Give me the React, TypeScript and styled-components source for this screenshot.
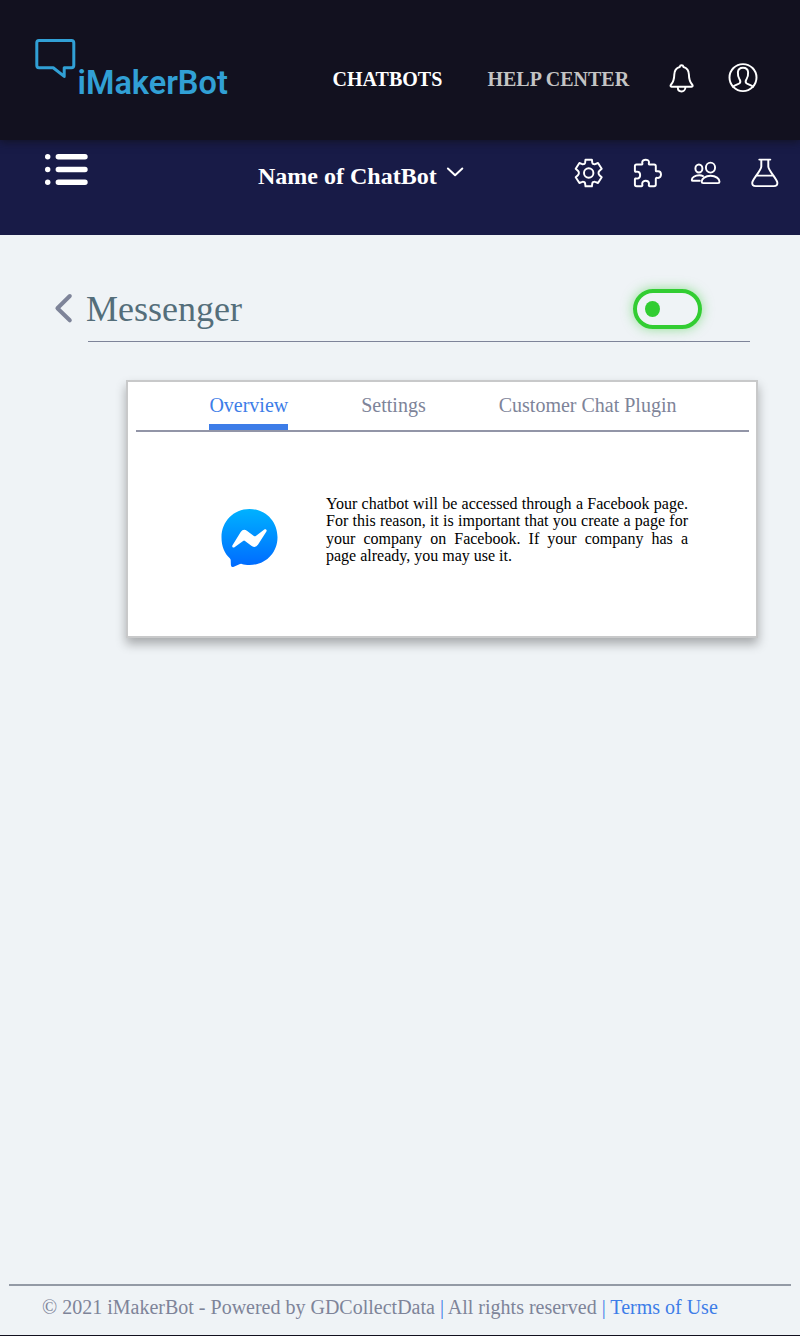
import React from "react";
import styled, { createGlobalStyle } from "styled-components";

const GlobalStyle = createGlobalStyle`
  *, *::before, *::after { box-sizing: border-box; }
  body {
    margin: 0;
    background: #eff3f6;
    font-family: "Liberation Serif", "Times New Roman", serif;
  }
  h1, h2, p { margin: 0; }
  svg { display: block; flex: none; overflow: visible; }
`;

const Page = styled.div`
  display: flex;
  flex-direction: column;
  min-height: 1336px;
  background: #eff3f6;
  border-bottom: 1px solid #12111f;
`;

const Header = styled.header`
  position: relative;
  z-index: 1;
  display: flex;
  height: 140px;
  padding-left: 35px;
  background: #12111f;
  box-shadow: 0 2px 8px rgba(18, 17, 31, 0.8);
`;

const Brand = styled.div`
  display: flex;
  width: 297.6px;
  padding-top: 38px;
`;

const BrandName = styled.span`
  margin: 26px 0 0 1.5px;
  font: 600 32.5px/38px Roboto, sans-serif;
  color: #31a0d5;
`;

const MainNav = styled.nav`
  display: flex;
  gap: 45.2px;
  width: 336.6px;
  padding-top: 68px;
`;

const NavLink = styled.a<{ $active?: boolean }>`
  font-size: 20px;
  line-height: 23px;
  font-weight: bold;
  white-space: nowrap;
  color: ${(p) => (p.$active ? "#ffffff" : "#c4c4c4")};
`;

const HeaderIcons = styled.div`
  display: flex;
  gap: 33.3px;
  padding-top: 63px;
`;

const BotBar = styled.div`
  display: flex;
  height: 95px;
  padding-left: 45px;
  background: #181b47;
`;

const MenuButton = styled.div`
  width: 213px;
  padding-top: 13px;
`;

const BotPicker = styled.div`
  display: flex;
  gap: 9.4px;
  width: 316px;
  padding-top: 22px;
`;

const BotName = styled.h2`
  font-size: 24px;
  line-height: 28px;
  white-space: nowrap;
  color: #ffffff;
`;

const ToolIcons = styled.div`
  display: flex;
  gap: 28.5px;
  padding-top: 17.6px;
`;

const Main = styled.main`
  flex: 1;
  padding: 54px 42px 0 54px;
`;

const TitleRow = styled.div`
  display: flex;
  align-items: flex-start;
  height: 52px;
  padding-right: 56px;
`;

const Title = styled.h1`
  flex: 1;
  padding-left: 12px;
  font-size: 36px;
  line-height: 41px;
  font-weight: normal;
  color: #546e7a;
`;

const Toggle = styled.div`
  display: flex;
  align-items: center;
  width: 69px;
  height: 40px;
  margin-right: 0.3px;
  padding-left: 8px;
  border: 4px solid #32cd32;
  border-radius: 20px;
  box-shadow: 0 0 12px rgba(50, 205, 50, 0.5);
`;

const Knob = styled.span`
  width: 15px;
  height: 16px;
  border-radius: 50%;
  background: #32cd32;
`;

const TitleRule = styled.div`
  width: 662px;
  height: 1px;
  margin-left: 34px;
  background: #7e8499;
`;

const Card = styled.section`
  width: 632px;
  height: 258px;
  margin: 38px 0 0 72px;
  padding: 0 7px 0 8px;
  border: 2px solid #c8c9ca;
  background: #ffffff;
  box-shadow: 0 6px 10px rgba(0, 0, 0, 0.3);
`;

const Tabs = styled.div`
  display: flex;
  gap: 73px;
  height: 50px;
  padding: 12px 0 0 73.4px;
  border-bottom: 2px solid #9295a7;
`;

const Tab = styled.div<{ $active?: boolean }>`
  height: 36px;
  border-bottom: 6px solid ${(p) => (p.$active ? "#3d7de8" : "transparent")};
  font-size: 20px;
  line-height: 22px;
  white-space: nowrap;
  color: ${(p) => (p.$active ? "#3d7de8" : "#7e8499")};
`;

const CardBody = styled.div`
  display: flex;
  gap: 48px;
  padding: 63px 0 0 85px;
`;

const LogoSlot = styled.div`
  padding-top: 14.4px;
`;

const Description = styled.p`
  width: 362px;
  font-size: 16px;
  line-height: 17.4px;
  text-align: justify;
  color: #000000;
`;

const Footer = styled.footer`
  height: 51px;
  margin: 0 9px;
  padding: 10px 0 0 33px;
  border-top: 2px solid #939aa5;
  font-size: 20px;
  line-height: 23px;
  white-space: nowrap;
  color: #7e8499;
`;

const FooterAccent = styled.span`
  color: #3d7de8;
`;

type StrokeIconProps = {
  width: number;
  height: number;
  stroke?: number;
  color?: string;
  children: React.ReactNode;
};

function StrokeIcon({ width, height, stroke = 1.95, color = "#ffffff", children }: StrokeIconProps) {
  return (
    <svg
      width={width}
      height={height}
      viewBox={`0 0 ${width} ${height}`}
      fill="none"
      stroke={color}
      strokeWidth={stroke}
      strokeLinejoin="round"
      strokeLinecap="round"
    >
      {children}
    </svg>
  );
}

const SpeechBubble = () => (
  <StrokeIcon width={41} height={41} stroke={3} color="#31a0d5">
    <path d="M3.9 2.4H36.4Q38.8 2.4 38.8 4.8V27.3Q38.8 29.7 36.4 29.7H29.2V38.4L18.2 29.7H3.9Q1.8 29.7 1.8 27.3V4.8Q1.8 2.4 3.9 2.4Z" />
  </StrokeIcon>
);

const Bell = () => (
  <StrokeIcon width={26} height={30}>
    <path d="M12.6 2.3C11.4 2.3 10.9 3 10.7 4C7 5 5.4 7.8 5.3 11.5C5.2 17 4.4 19 2.1 21.5C1.1 22.6 1.4 23.8 2.6 23.8H22.6C23.8 23.8 24.1 22.6 23.1 21.5C20.8 19 20 17 19.9 11.5C19.8 7.8 18.2 5 14.5 4C14.3 3 13.8 2.3 12.6 2.3Z" />
    <path d="M8.8 24.2C8.8 29.8 16.4 29.8 16.4 24.2" />
  </StrokeIcon>
);

const UserCircle = () => (
  <StrokeIcon width={30} height={30}>
    <circle cx="15" cy="14.6" r="13.5" />
    <path d="M5 23.8C6.3 22.2 10.7 21.3 11.7 20.1C12.4 19.2 12.2 17.2 11.5 16.2C10.2 14.4 9.7 12.4 9.9 9.3C10.1 6.2 11.8 4.7 15 4.7C18.2 4.7 19.9 6.2 20.1 9.3C20.3 12.4 19.8 14.4 18.5 16.2C17.8 17.2 17.6 19.2 18.3 20.1C19.3 21.3 23.7 22.2 25 23.8" />
  </StrokeIcon>
);

const ListMenu = () => (
  <StrokeIcon width={43} height={34} stroke={5.4}>
    <path d="M13.3 3.7H40M13.3 16.5H40M13.3 29.3H40" />
    <g fill="#ffffff" stroke="none">
      <circle cx="2.7" cy="3.7" r="2.7" />
      <circle cx="2.7" cy="16.5" r="2.7" />
      <circle cx="2.7" cy="29.3" r="2.7" />
    </g>
  </StrokeIcon>
);

const ChevronDown = () => (
  <StrokeIcon width={18} height={19} stroke={2}>
    <path d="M1.9 6.5L9.1 13.3L16.3 6.5" />
  </StrokeIcon>
);

const Gear = () => (
  <StrokeIcon width={30} height={30}>
    <circle cx="14.7" cy="15" r="4.7" />
    <path d="M11.5 1.7H17.9L18.3 4.7Q18.5 5.6 19.4 6Q20.3 6.5 21.1 6.1L24 5L27.7 10.8L25.5 12.8Q24.5 13.7 24.5 15Q24.5 16.3 25.5 17.2L27.7 19.2L24 25L21.1 23.9Q20.3 23.5 19.4 24Q18.5 24.4 18.3 25.3L17.9 28.3H11.5L11.1 25.3Q10.9 24.4 10 24Q9.1 23.5 8.3 23.9L5.4 25L1.7 19.2L3.9 17.2Q4.9 16.3 4.9 15Q4.9 13.7 3.9 12.8L1.7 10.8L5.4 5L8.3 6.1Q9.1 6.5 10 6Q10.9 5.6 11.1 4.7Z" />
  </StrokeIcon>
);

const Puzzle = () => (
  <StrokeIcon width={30} height={30}>
    <path d="M3.5 6.4H8.6C10 6.4 9.2 5 9.2 4.2C9.2 .8 16 .8 16 4.2C16 5 15.2 6.4 16.6 6.4H21.1Q22.8 6.4 22.8 8.1V12.4C22.8 14 24.2 13.2 25 13.2C29 13.2 29 20 25 20C24.2 20 22.8 19.2 22.8 20.8V26.5Q22.8 28.2 21.1 28.2H16.7C15.2 28.2 16 26.6 16 25.8C16 21.8 9.2 21.8 9.2 25.8C9.2 26.6 10 28.2 8.5 28.2H3.5Q1.9 28.2 1.9 26.5V21.5C1.9 19.8 3.2 20.6 4 20.6C8.2 20.6 8.2 13.6 4 13.6C3.2 13.6 1.9 14.4 1.9 12.8V8.1Q1.9 6.4 3.5 6.4Z" />
  </StrokeIcon>
);

const People = () => (
  <StrokeIcon width={30} height={30}>
    <ellipse cx="7.9" cy="10.5" rx="3.5" ry="4" />
    <ellipse cx="19.5" cy="9.6" rx="4.6" ry="5" />
    <path d="M12 18.1Q10.6 17.3 8.3 17.3C3.8 17.3 .8 19.8 .8 21.9Q.8 22.8 2 22.8H8.8" />
    <path d="M12.2 25.1Q10.7 25.1 10.7 23.8C10.7 20.8 14.3 17.7 19.6 17.7C24.9 17.7 28.5 20.8 28.5 23.8Q28.5 25.1 27 25.1Z" />
  </StrokeIcon>
);

const Flask = () => (
  <StrokeIcon width={30} height={30}>
    <path d="M9.3 1.6H20.3M11.3 1.6V8.4C11.3 12 3.1 20.7 2.4 24C1.8 26.6 3.1 28.1 5.8 28.1H23.8C26.5 28.1 27.8 26.6 27.2 24C26.5 20.7 18.3 12 18.3 8.4V1.6M6 17.6H23.6" />
  </StrokeIcon>
);

const BackChevron = () => (
  <StrokeIcon width={20} height={38} stroke={4} color="#7e8499">
    <path d="M15.8 7L3.4 19.2L15.8 31.3" />
  </StrokeIcon>
);

const MessengerLogo = () => (
  <svg width="57" height="58" viewBox="0 0 57 58">
    <defs>
      <linearGradient id="messenger" x1="0" y1="0" x2="0" y2="1">
        <stop offset="0" stopColor="#00b2ff" />
        <stop offset="1" stopColor="#006aff" />
      </linearGradient>
    </defs>
    <path
      fill="url(#messenger)"
      d="M28.5 0C44.6 0 56.5 12.5 56.5 28.2C56.5 44 44.4 56 28.5 56C25.5 56 23 55.6 20.8 54.9Q19.9 54.7 19 55.1L12.8 57.7Q10 58.6 9.9 56.1L9.7 51.2Q9.7 50 8.8 49.2C3.4 44.2 .5 37.2 .5 28.2C.5 12.5 12.4 0 28.5 0Z"
    />
    <path
      fill="#ffffff"
      d="M11.5 36.3L19.7 23.1Q22.4 19.2 26.2 22L32.9 27Q33.8 27.7 34.8 27L43.3 20.5C44.7 19.5 46.3 20.9 45.4 22.4L37.1 35.6Q34.4 39.5 30.7 36.9L24 31.9Q23.1 31.2 22.1 31.9L13.5 38.3C12.2 39.3 10.5 37.8 11.5 36.3Z"
    />
  </svg>
);

export default function App() {
  return (
    <Page>
      <GlobalStyle />
      <Header>
        <Brand>
          <SpeechBubble />
          <BrandName>iMakerBot</BrandName>
        </Brand>
        <MainNav>
          <NavLink $active>CHATBOTS</NavLink>
          <NavLink>HELP CENTER</NavLink>
        </MainNav>
        <HeaderIcons>
          <Bell />
          <UserCircle />
        </HeaderIcons>
      </Header>
      <BotBar>
        <MenuButton>
          <ListMenu />
        </MenuButton>
        <BotPicker>
          <BotName>Name of ChatBot</BotName>
          <ChevronDown />
        </BotPicker>
        <ToolIcons>
          <Gear />
          <Puzzle />
          <People />
          <Flask />
        </ToolIcons>
      </BotBar>
      <Main>
        <TitleRow>
          <BackChevron />
          <Title>Messenger</Title>
          <Toggle>
            <Knob />
          </Toggle>
        </TitleRow>
        <TitleRule />
        <Card>
          <Tabs>
            <Tab $active>Overview</Tab>
            <Tab>Settings</Tab>
            <Tab>Customer Chat Plugin</Tab>
          </Tabs>
          <CardBody>
            <LogoSlot>
              <MessengerLogo />
            </LogoSlot>
            <Description>
              Your chatbot will be accessed through a Facebook page. For this reason, it is important that you
              create a page for your company on Facebook. If your company has a page already, you may use it.
            </Description>
          </CardBody>
        </Card>
      </Main>
      <Footer>
        © 2021 iMakerBot - Powered by GDCollectData <FooterAccent>|</FooterAccent> All rights reserved{" "}
        <FooterAccent>|</FooterAccent> <FooterAccent>Terms of Use</FooterAccent>
      </Footer>
    </Page>
  );
}
